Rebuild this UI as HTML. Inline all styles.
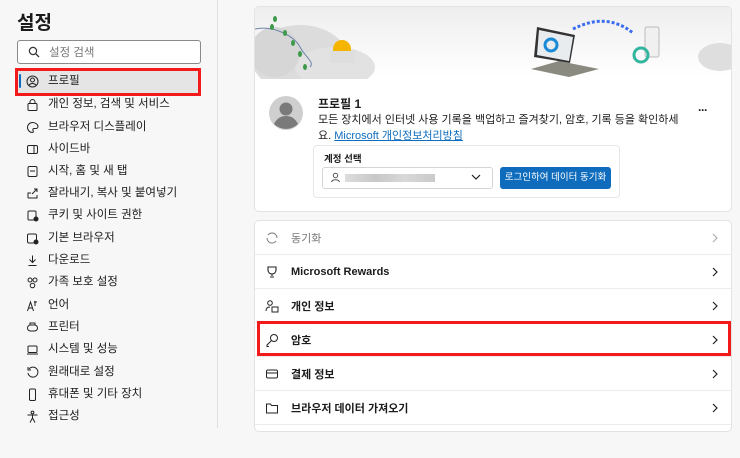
<!DOCTYPE html>
<html><head><meta charset="utf-8"><style>
*{box-sizing:border-box;margin:0;padding:0}
body{width:740px;height:428px;overflow:hidden;background:#f7f7f7;font-family:"Liberation Sans","Noto Sans CJK KR",sans-serif;color:#1b1b1b;position:relative}
.abs{position:absolute}
.side{left:0;top:0;width:218px;height:428px;background:#f7f7f7;border-right:1px solid #e0e0e0}
.item{position:absolute;left:26px;font-size:11.5px;height:20px;line-height:20px;display:flex;align-items:center}
.item svg{width:13px;height:13px;margin-right:9px;flex:none}
.card{background:#fff;border:1px solid #e3e3e3;border-radius:5px;left:254px;width:478px}
.row{position:absolute;left:0;width:476px;height:34px;border-top:1px solid #ececec;display:flex;align-items:center;font-size:11px;font-weight:bold}
.row svg.ic{position:absolute;left:10px;width:14px;height:14px}
.row span{position:absolute;left:36px}
.row .ch{position:absolute;right:12px;width:8px;height:10px}
</style></head><body>
<div class="abs side"></div>
<div class="abs" style="left:17px;top:8px;font-size:19px;font-weight:bold">설정</div>
<div class="abs" style="left:17px;top:40px;width:184px;height:24px;border:1px solid #8a8a8a;border-radius:3px;background:#fff"></div>
<svg class="abs" style="left:28px;top:46px" width="12" height="12" viewBox="0 0 12 12"><circle cx="5" cy="5" r="3.6" fill="none" stroke="#333" stroke-width="1.2"/><path d="M7.7 7.7L11 11" stroke="#333" stroke-width="1.3"/></svg>
<div class="abs" style="left:49px;top:44px;font-size:11.5px;color:#777">설정 검색</div>
<div class="abs" style="left:17px;top:69px;width:183px;height:25px;background:#e5e5e5"></div>
<div class="abs" style="left:19px;top:74px;width:2px;height:14px;background:#0f6cbd;border-radius:1px"></div>
<div class="abs" style="left:15px;top:68px;width:186px;height:28px;border:3px solid #f21a1a"></div>
<div id="items"></div>
<!-- main -->
<div class="abs card" style="top:6px;height:206px;overflow:hidden">
 <div class="abs" style="left:0;top:0;width:478px;height:70px;background:linear-gradient(#eeeeee,#fafafa 70%,#fff)"></div>
 <svg class="abs" style="left:0;top:0" width="478" height="72" viewBox="0 0 478 72">
  <ellipse cx="45" cy="52" rx="48" ry="34" fill="#dcdcdc"/><ellipse cx="80" cy="60" rx="40" ry="20" fill="#e2e2e2"/><ellipse cx="20" cy="45" rx="25" ry="25" fill="#d6d6d6"/>
  <path d="M0 22C20 18 40 30 45 40S60 55 55 60" fill="none" stroke="#6b86a8" stroke-width="1"/>
  <g fill="#3c9a4a"><ellipse cx="17" cy="20" rx="2" ry="3"/><ellipse cx="30" cy="26" rx="2" ry="3"/><ellipse cx="38" cy="36" rx="2" ry="3"/><ellipse cx="45" cy="47" rx="2" ry="3"/><ellipse cx="50" cy="60" rx="2" ry="3"/><ellipse cx="20" cy="12" rx="2" ry="3"/></g>
  <circle cx="87" cy="42" r="9" fill="#f4b400"/><rect x="75" y="44" width="25" height="12" fill="#dedede"/>
  <path d="M276 62l28-8 40 8-30 8z" fill="#8a8a80"/><path d="M282 20l38 8-5 28-36-6z" fill="#333"/><path d="M284 23l34 7-4 24-32-6z" fill="#e9ecef"/><circle cx="296" cy="38" r="6" fill="none" stroke="#1a8ad6" stroke-width="3"/>
  <path d="M318 22c20-10 40-12 60 4" fill="none" stroke="#3a6cf0" stroke-width="3" stroke-dasharray="3 2"/>
  <rect x="390" y="20" width="14" height="30" rx="2" fill="#f0f0f0" stroke="#bbb"/><circle cx="386" cy="48" r="7" fill="none" stroke="#33b5a0" stroke-width="3"/>
  <ellipse cx="465" cy="50" rx="22" ry="14" fill="#dedede"/>
 </svg>
 <svg class="abs" style="left:14px;top:89px" width="34" height="34" viewBox="0 0 34 34"><circle cx="17" cy="17" r="17" fill="#cfcfcf"/><circle cx="17" cy="13" r="6.5" fill="#7a7a7a"/><path d="M5 28c3-6 7-8 12-8s9 2 12 8a17 17 0 0 1-24 0z" fill="#7a7a7a"/></svg>
 <div class="abs" style="left:63px;top:88px;font-size:12px;font-weight:bold">프로필 1</div>
 <div class="abs" style="left:63px;top:105px;font-size:11px;line-height:16px;width:380px">모든 장치에서 인터넷 사용 기록을 백업하고 즐겨찾기, 암호, 기록 등을 확인하세<br>요. <span style="color:#0f6cbd;text-decoration:underline">Microsoft 개인정보처리방침</span></div>
 <div class="abs" style="left:443px;top:96px;font-size:12px;font-weight:bold;letter-spacing:-1px">···</div>
 <div class="abs" style="left:58px;top:138px;width:307px;height:53px;border:1px solid #e6e6e6;border-radius:4px"></div>
 <div class="abs" style="left:69px;top:144px;font-size:9.5px;font-weight:bold">계정 선택</div>
 <div class="abs" style="left:67px;top:160px;width:171px;height:22px;border:1px solid #d4d4d4;border-radius:3px"></div>
 <svg class="abs" style="left:75px;top:165px" width="11" height="11" viewBox="0 0 11 11"><circle cx="5.5" cy="3.5" r="2.2" fill="none" stroke="#555"/><path d="M1.5 10c1-3 7-3 8 0" fill="none" stroke="#555"/></svg>
 <div class="abs" style="left:90px;top:167px;width:90px;height:8px;background:linear-gradient(90deg,#ddd,#c8c8c8,#d8d8d8,#cacaca)"></div>
 <svg class="abs" style="left:216px;top:166px" width="10" height="8" viewBox="0 0 10 8"><path d="M1 2l4 4 4-4" fill="none" stroke="#222" stroke-width="1.2"/></svg>
 <div class="abs" style="left:245px;top:160px;width:111px;height:22px;background:#0f6cbd;border-radius:3px;color:#fff;font-size:9.5px;line-height:22px;text-align:center">로그인하여 데이터 동기화</div>
</div>
<div class="abs card" style="top:220px;height:212px">
 <div class="row" style="top:0;border-top:none;color:#777;font-weight:normal"><svg class="ic" viewBox="0 0 14 14"><path d="M3 4a5 5 0 0 1 8 0M11 10a5 5 0 0 1-8 0M2 7a5 5 0 0 0 1 3M12 7a5 5 0 0 0-1-3" fill="none" stroke="#777" stroke-width="1"/></svg><span>동기화</span><svg class="ch" viewBox="0 0 8 10"><path d="M2 1l4 4-4 4" fill="none" stroke="#aaa" stroke-width="1.1"/></svg></div>
 <div class="row" style="top:33px"><svg class="ic" viewBox="0 0 14 14"><path d="M3 2h8v3a4 4 0 0 1-8 0zM7 9v2M5 12h4" fill="none" stroke="#222" stroke-width="1.1"/></svg><span>Microsoft Rewards</span><svg class="ch" viewBox="0 0 8 10"><path d="M2 1l4 4-4 4" fill="none" stroke="#222" stroke-width="1.2"/></svg></div>
 <div class="row" style="top:67px"><svg class="ic" viewBox="0 0 14 14"><circle cx="5" cy="4" r="2.3" fill="none" stroke="#222"/><path d="M1 12c0-3 2-4 4-4" fill="none" stroke="#222"/><rect x="7" y="8" width="6" height="5" fill="none" stroke="#222"/></svg><span>개인 정보</span><svg class="ch" viewBox="0 0 8 10"><path d="M2 1l4 4-4 4" fill="none" stroke="#222" stroke-width="1.2"/></svg></div>
 <div class="row" style="top:101px"><svg class="ic" viewBox="0 0 14 14"><circle cx="9" cy="5" r="3.5" fill="none" stroke="#222"/><path d="M6.5 7.5L2 12v1.5h2" fill="none" stroke="#222"/></svg><span>암호</span><svg class="ch" viewBox="0 0 8 10"><path d="M2 1l4 4-4 4" fill="none" stroke="#222" stroke-width="1.2"/></svg></div>
 <div class="row" style="top:135px"><svg class="ic" viewBox="0 0 14 14"><rect x="1.5" y="3" width="11" height="8" rx="1.5" fill="none" stroke="#222"/><path d="M1.5 6h11" stroke="#222"/></svg><span>결제 정보</span><svg class="ch" viewBox="0 0 8 10"><path d="M2 1l4 4-4 4" fill="none" stroke="#222" stroke-width="1.2"/></svg></div>
 <div class="row" style="top:169px"><svg class="ic" viewBox="0 0 14 14"><path d="M1.5 3h4l1 1.5h6v7.5h-11z" fill="none" stroke="#222"/></svg><span>브라우저 데이터 가져오기</span><svg class="ch" viewBox="0 0 8 10"><path d="M2 1l4 4-4 4" fill="none" stroke="#222" stroke-width="1.2"/></svg></div>
 <div class="row" style="top:203px"></div>
</div>
<div class="abs" style="left:257px;top:321px;width:474px;height:35px;border:3px solid #f21a1a"></div>
<script>
var t=["프로필","개인 정보, 검색 및 서비스","브라우저 디스플레이","사이드바","시작, 홈 및 새 탭","잘라내기, 복사 및 붙여넣기","쿠키 및 사이트 권한","기본 브라우저","다운로드","가족 보호 설정","언어","프린터","시스템 및 성능","원래대로 설정","휴대폰 및 기타 장치","접근성"];
var ic=['<circle cx="6.5" cy="6.5" r="5.5" fill="none" stroke="#222"/><circle cx="6.5" cy="5" r="2" fill="none" stroke="#222"/><path d="M3 10c2-2 5-2 7 0" fill="none" stroke="#222"/>','<rect x="2" y="5.5" width="9" height="7" rx="1" fill="none" stroke="#222"/><path d="M4 5.5V4a2.5 2.5 0 0 1 5 0v1.5" fill="none" stroke="#222"/>','<path d="M6.5 1.5a5 5 0 1 0 0 10c1 0 1-1 .5-2s0-2 1-2h2a2 2 0 0 0 2-2c0-2-2.5-4-5.5-4z" fill="none" stroke="#222"/>','<rect x="1.5" y="2.5" width="10" height="8" rx="1.5" fill="none" stroke="#222"/><path d="M8 2.5v8" stroke="#222"/>','<rect x="2" y="1.5" width="9" height="10" rx="1.5" fill="none" stroke="#222"/><path d="M4 6h5" stroke="#222"/>','<path d="M2 11V6h3M11 2L6 7M8 2h3v3" fill="none" stroke="#222"/><path d="M2 11h9V8" fill="none" stroke="#222"/>','<rect x="2" y="2" width="8" height="9" rx="1" fill="none" stroke="#222"/><circle cx="10" cy="10" r="2.5" fill="#222"/>','<rect x="1.5" y="2" width="9" height="9" rx="1.5" fill="none" stroke="#222"/><circle cx="10" cy="10" r="2.5" fill="#222"/>','<path d="M6.5 1.5v7M3.5 5.5l3 3 3-3M2.5 11.5h8" fill="none" stroke="#222"/>','<circle cx="4" cy="4" r="2" fill="none" stroke="#222"/><circle cx="9" cy="4" r="2" fill="none" stroke="#222"/><circle cx="6.5" cy="9.5" r="2.3" fill="none" stroke="#222"/>','<path d="M1.5 12l3-9 3 9M2.5 9h4M9 2v5M8 3h3" fill="none" stroke="#222"/>','<rect x="1.5" y="4" width="10" height="6" rx="3" fill="none" stroke="#222"/><path d="M4 4V2h5v2M4 10h5" fill="none" stroke="#222"/>','<rect x="2" y="3" width="9" height="6.5" rx="1" fill="none" stroke="#222"/><path d="M1 11h11" stroke="#222"/>','<path d="M3 3a5 5 0 1 1-1 4M2 1v3h3" fill="none" stroke="#222"/>','<rect x="3.5" y="1" width="6" height="11.5" rx="1.2" fill="none" stroke="#222"/>','<circle cx="6.5" cy="2.5" r="1.4" fill="none" stroke="#222"/><path d="M1.5 5h10M6.5 5v3l-2.5 4.5M6.5 8l2.5 4.5" fill="none" stroke="#222"/>'];
var y=[71,94,117,139,161,183,205,228,250,272,295,317,339,362,384,406],h='';
for(var i=0;i<16;i++)h+='<div class="item" style="top:'+y[i]+'px"><svg viewBox="0 0 13 13">'+ic[i]+'</svg>'+t[i]+'</div>';
document.getElementById('items').innerHTML=h;
</script>
</body></html>
